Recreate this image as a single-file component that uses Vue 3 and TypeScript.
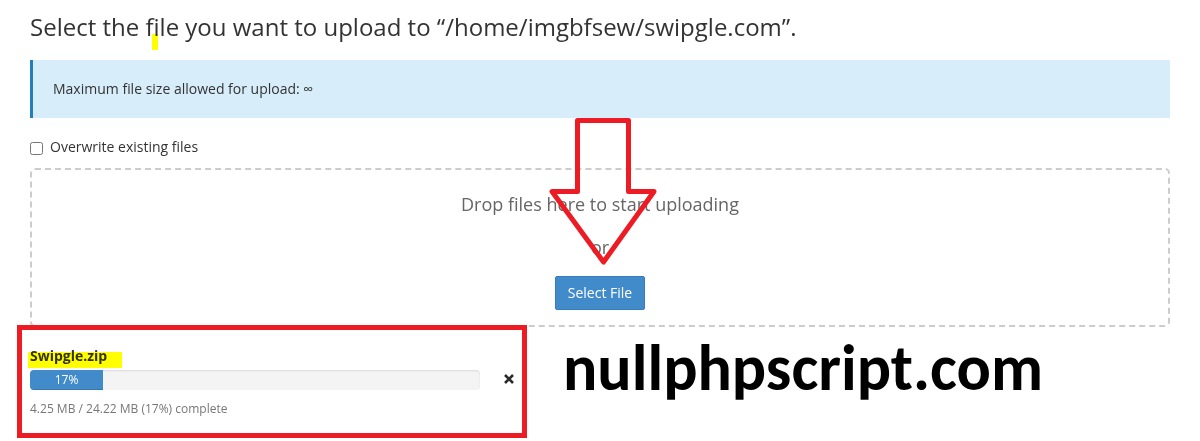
<script setup lang="ts">
import { computed, ref } from 'vue'

interface Upload {
  name: string
  done: string
  total: string
  percent: number
}

const destination = '/home/imgbfsew/swipgle.com'
const overwrite = ref(false)
const picker = ref<HTMLInputElement | null>(null)
const upload = ref<Upload | null>({ name: 'Swipgle.zip', done: '4.25 MB', total: '24.22 MB', percent: 17 })

const fill = computed(() => ({ width: `${(upload.value?.percent ?? 0) * 4 + 5}px` }))
</script>

<template>
  <main class="page">
    <h1 class="title">
      Select the f<span class="mark-letter">i</span>le you want to upload to “{{ destination }}”.
    </h1>

    <p class="notice">Maximum file size allowed for upload: ∞</p>

    <div class="option">
      <input id="overwrite" v-model="overwrite" type="checkbox" />
      <label for="overwrite">Overwrite existing files</label>
    </div>

    <section class="dropzone">
      <p>Drop files here to start uploading</p>
      <p>or</p>
      <button type="button" class="select" @click="picker?.click()">Select File</button>
      <input ref="picker" type="file" hidden />
      <svg class="arrow" width="112" height="152" viewBox="0 0 112 152" aria-hidden="true">
        <path d="M30.5 5.5H81.5V76.5H107L56.5 147L5 76.5H30.5Z" />
      </svg>
    </section>

    <div class="bottom">
      <section v-if="upload" class="upload">
        <div class="details">
          <h2 class="name">{{ upload.name }}</h2>
          <div
            class="track"
            role="progressbar"
            :aria-valuenow="upload.percent"
            aria-valuemin="0"
            aria-valuemax="100"
          >
            <div class="fill" :style="fill">{{ upload.percent }}%</div>
          </div>
          <p class="status">{{ upload.done }} / {{ upload.total }} ({{ upload.percent }}%) complete</p>
        </div>
        <button type="button" class="cancel" aria-label="Cancel upload" @click="upload = null">
          <svg width="10" height="10" viewBox="0 0 10 10" aria-hidden="true">
            <path d="M1 1L9 9M9 1L1 9" />
          </svg>
        </button>
      </section>
      <p class="site">nullphpscript.com</p>
    </div>
  </main>
</template>

<style>
body {
  margin: 0;
  background: #fff;
}
</style>

<style scoped>
.page {
  padding: 10px 30px 0;
  font-family: "Open Sans", "Noto Sans", sans-serif;
  font-size: 14px;
  line-height: 20px;
  color: #333;
}

.page * {
  box-sizing: border-box;
}

p,
h1,
h2 {
  margin: 0;
}

.title {
  font-size: 24px;
  font-weight: 400;
  line-height: 34px;
  font-variant-ligatures: none;
}

.mark-letter {
  position: relative;
}

.mark-letter::after {
  content: "";
  position: absolute;
  left: -2px;
  bottom: -7px;
  width: 6px;
  height: 16px;
  background: #ff0;
  mix-blend-mode: multiply;
}

.notice {
  margin-top: 16px;
  padding: 19px 20px;
  border-left: 3px solid #2380b7;
  background: #d7edf9;
}

.option {
  display: flex;
  align-items: center;
  gap: 7px;
  margin: 19px 0 11px;
}

.option input {
  width: 13px;
  height: 13px;
  margin: 3px 0 0;
}

.dropzone {
  position: relative;
  display: flex;
  flex-direction: column;
  align-items: center;
  gap: 15px;
  padding: 20px 0 15px;
  border: 2px dashed #ccc;
  border-radius: 5px;
  font-size: 18px;
  line-height: 28px;
  color: #666;
}

.select {
  height: 34px;
  padding: 0 12px;
  border: 1px solid #357ebd;
  border-radius: 2px;
  background: #428bca;
  color: #fff;
  font: inherit;
  font-size: 14px;
  line-height: 20px;
}

.arrow {
  position: absolute;
  top: -55px;
  left: calc(50% - 53px);
  pointer-events: none;
}

.arrow path {
  fill: none;
  stroke: #ed1c24;
  stroke-width: 5;
  stroke-linejoin: round;
}

.bottom {
  display: flex;
  align-items: flex-start;
  gap: 36px;
  margin: -2px 0 0 -13px;
}

.upload {
  position: relative;
  display: flex;
  align-items: flex-start;
  gap: 24px;
  flex: none;
  padding: 16px 8px 14px;
  border: 5px solid #ed1c24;
}

.details {
  width: 450px;
}

.name {
  position: relative;
  width: max-content;
  margin-bottom: 4px;
  font-size: 14px;
  font-weight: 700;
}

.name::after {
  content: "";
  position: absolute;
  top: 6px;
  left: -2px;
  right: -15px;
  height: 16px;
  background: #ff0;
  mix-blend-mode: multiply;
}

.track {
  height: 20px;
  overflow: hidden;
  border-radius: 4px;
  background: #f4f4f4;
  box-shadow: inset 0 1px 2px rgba(0, 0, 0, 0.1);
}

.fill {
  height: 100%;
  background: #428bca;
  box-shadow: inset 0 -1px 0 rgba(0, 0, 0, 0.15);
  color: #fff;
  font-size: 12px;
  line-height: 20px;
  text-align: center;
}

.status {
  margin-top: 9px;
  font-size: 12px;
  color: #777;
}

.cancel {
  display: flex;
  margin-top: 28px;
  padding: 0;
  border: 0;
  background: none;
}

.cancel path {
  fill: none;
  stroke: #2b2b2b;
  stroke-width: 2.6;
}

.site {
  margin-top: 7px;
  font-family: Carlito, Lato, sans-serif;
  font-size: 64px;
  font-weight: 700;
  line-height: 72px;
  color: #000;
}
</style>
